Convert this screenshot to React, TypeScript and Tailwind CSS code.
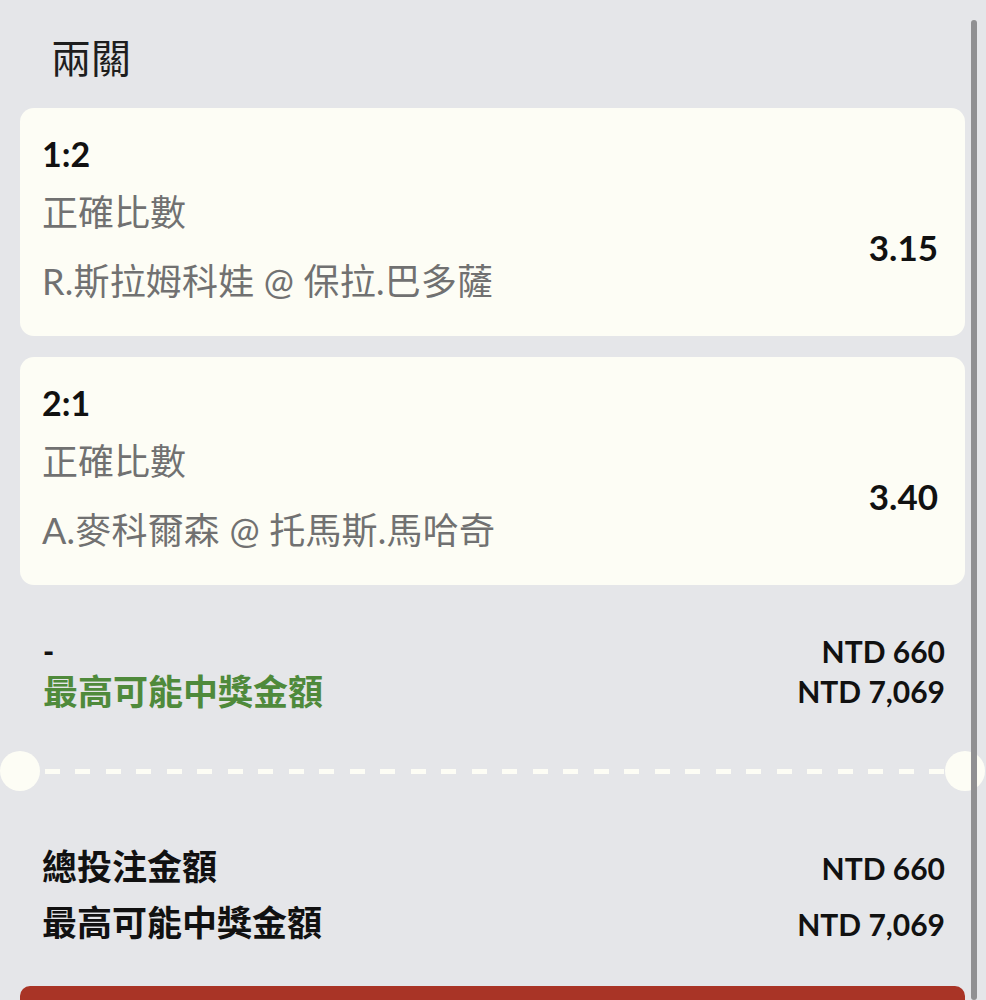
const FONT = "font-['Lato','Noto_Sans_CJK_TC',sans-serif]";

type Leg = {
  score: string;
  market: string;
  match: string;
  odds: string;
};

const legs: Leg[] = [
  { score: "1:2", market: "正確比數", match: "R.斯拉姆科娃 @ 保拉.巴多薩", odds: "3.15" },
  { score: "2:1", market: "正確比數", match: "A.麥科爾森 @ 托馬斯.馬哈奇", odds: "3.40" },
];

function LegCard({ leg }: { leg: Leg }) {
  return (
    <div className="rounded-[14px] bg-[#fdfdf5] pl-[22px] pr-[27px] pt-[26px] pb-[33px]">
      <div className="text-[34px] leading-[40px] font-bold text-[#111]">{leg.score}</div>
      <div className="mt-[16px] flex items-center justify-between">
        <div className="text-[36px] leading-[44px] text-[#717171]">
          <div>{leg.market}</div>
          <div className="mt-[25px] tracking-[0.2px]">{leg.match}</div>
        </div>
        <div className="text-[35px] leading-[40px] font-bold text-[#111]">{leg.odds}</div>
      </div>
    </div>
  );
}

export default function App() {
  return (
    <div className={`flex h-[1000px] w-[986px] overflow-hidden bg-[#e5e6e9] ${FONT}`}>
      <main className="ml-[20px] flex w-[945px] flex-col">
        <h1 className="mt-[35px] pl-[31px] text-[40px] leading-[46px] font-normal text-[#1e1e1e]">兩關</h1>

        <div className="mt-[27px] flex flex-col gap-[21px]">
          {legs.map((leg) => (
            <LegCard key={leg.score} leg={leg} />
          ))}
        </div>

        <div className="mt-[46px] flex justify-between pl-[23px] pr-[20px]">
          <div className="font-bold">
            <div className="text-[30px] leading-[40px] font-black text-[#111]">-</div>
            <div className="text-[35px] leading-[40px] text-[#4f8a3b]">最高可能中獎金額</div>
          </div>
          <div className="text-right text-[30px] leading-[40px] font-bold text-[#111]">
            <div>NTD 660</div>
            <div>NTD 7,069</div>
          </div>
        </div>

        <div className="-mx-[20px] mt-[40px] flex h-[40px] items-center">
          <div className="h-[40px] w-[40px] shrink-0 rounded-full bg-[#fdfdf5]" />
          <div className="ml-[5px] h-[5px] flex-1 bg-[repeating-linear-gradient(90deg,#fdfdf5_0px,#fdfdf5_15px,transparent_15px,transparent_30.5px)]" />
          <div className="h-[40px] w-[40px] shrink-0 rounded-full bg-[#fdfdf5]" />
        </div>

        <div className="mt-[48px] flex flex-col pl-[22px] pr-[20px] font-bold text-[#111]">
          <div className="flex items-baseline justify-between">
            <span className="text-[35px] leading-[54px]">總投注金額</span>
            <span className="text-[30px] leading-[54px]">NTD 660</span>
          </div>
          <div className="flex items-baseline justify-between">
            <span className="text-[35px] leading-[54px]">最高可能中獎金額</span>
            <span className="text-[30px] leading-[54px]">NTD 7,069</span>
          </div>
        </div>

        <button className="mt-[35px] h-[70px] w-full shrink-0 rounded-[10px] bg-[#a93426]" />
      </main>

      <div className="ml-[6px] mt-[20px] w-[6px] rounded-full bg-[#909092]" />
    </div>
  );
}
